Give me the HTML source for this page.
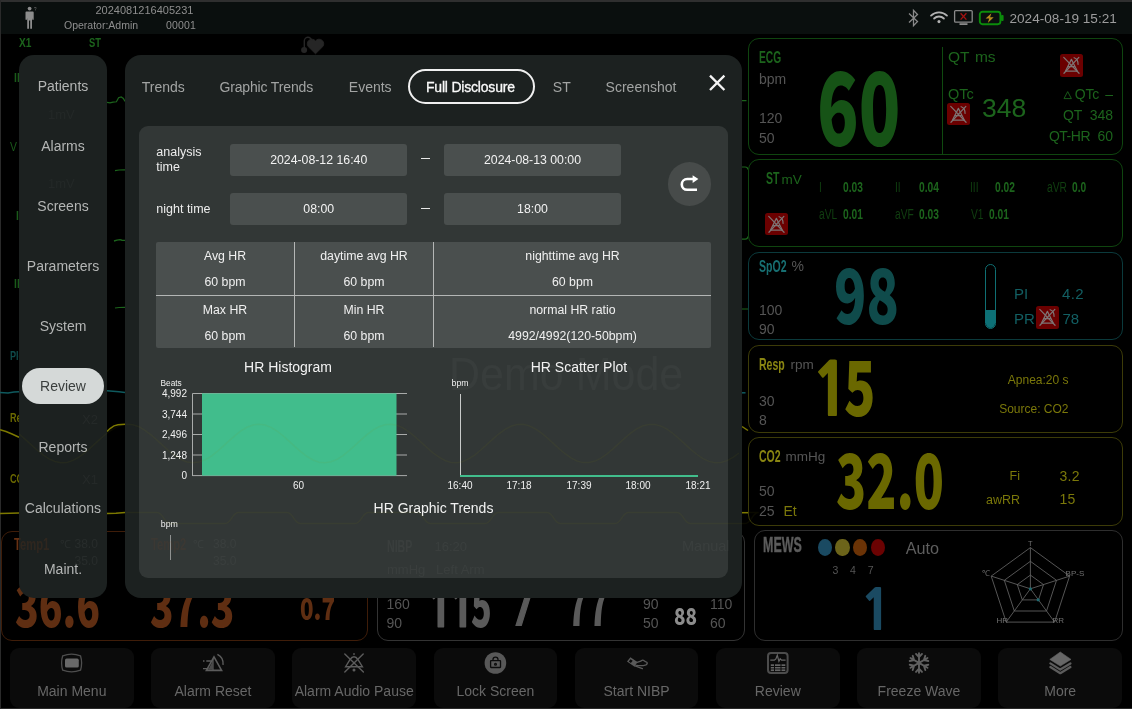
<!DOCTYPE html>
<html lang="en">
<head>
<meta charset="utf-8">
<title>Patient Monitor - Review</title>
<style>
*{box-sizing:border-box;margin:0;padding:0}
html,body{width:1132px;height:709px;overflow:hidden;background:#000}
body{position:relative;font-family:"Liberation Sans",sans-serif;color:#ddd}
.a{position:absolute;white-space:nowrap;line-height:1}
.c{position:absolute;white-space:nowrap;line-height:1;font-weight:bold;transform-origin:0 0;transform:scaleX(.62)}
.r{text-align:right}
.ctr{text-align:center}
.pnl{position:absolute;border:1px solid #333;border-radius:11px}
.g{color:#1c641c}
.gy{color:#555}
.t{color:#136060}
.y{color:#7d7a0a}
.red{position:absolute;width:22.8px;height:22.8px;background:#6b0000;border-radius:2.5px;margin:-.4px 0 0 -.3px}
.red svg{position:absolute;left:0;top:0}
/* top */
#frameT{position:absolute;left:0;top:0;width:1132px;height:2px;background:#2f2f2f}
#frameL{position:absolute;left:0;top:0;width:1px;height:709px;background:#2a2a2a}
#frameB{position:absolute;left:0;top:708px;width:1132px;height:1px;background:#2a2a2a}
#top{position:absolute;left:1px;top:2px;width:1131px;height:32px;background:#0a0f0e}
/* sidebar */
#side{position:absolute;left:19px;top:55px;width:88px;height:543px;background:#1c2120;border-radius:15px}
#side .it{position:absolute;left:0;width:88px;text-align:center;font-size:14px;color:#b4b6b5;line-height:16px}
#side .sel{position:absolute;left:3px;top:313px;width:82px;height:36px;border-radius:18px;background:#d5d9d8}
/* dialog */
#dlg{position:absolute;left:125px;top:55px;width:617px;height:543px;background:#1c2120;border-radius:16px}
#inner{position:absolute;left:14px;top:70.500px;width:589px;height:452px;background:#323736;border-radius:9px}
.tab{position:absolute;top:24px;font-size:14px;line-height:16px;color:#a2a4a3;white-space:nowrap}
.inp{position:absolute;width:177px;height:32px;background:#4a4f4e;border-radius:3px;color:#f2f2f2;font-size:12.3px;line-height:32px;text-align:center}
.lbl{position:absolute;font-size:12.5px;line-height:14.5px;color:#ececec}
.cell{position:absolute;font-size:12.3px;line-height:14px;color:#f0f0f0;text-align:center;white-space:nowrap}
.ttl{position:absolute;font-size:14px;line-height:16px;color:#f2f2f2;text-align:center;white-space:nowrap}
.ax{position:absolute;font-size:10px;line-height:10px;color:#f0f0f0;white-space:nowrap}
/* bottom */
.btn{position:absolute;top:648px;width:123.600px;height:59.500px;background:#0b0b0b;border-radius:9px}
.btn span{position:absolute;left:-10px;right:-10px;top:34.600px;text-align:center;font-size:14px;line-height:16px;color:#676767;white-space:nowrap}
.btn svg{position:absolute;left:50px;top:5px}
.st1{font-size:15.5px;color:#103f10;font-weight:normal;transform:scaleX(.66)}
.st2{font-size:15.5px;color:#1c641c;transform:scaleX(.66)}
.n{font-family:"Noto Sans CJK SC","Liberation Sans",sans-serif;font-weight:900}
.k{font-family:"NanumGothic","Liberation Sans",sans-serif;font-weight:800}
#root{position:absolute;left:0;top:0;width:1132px;height:709px;will-change:transform}
</style>
</head>
<body>
<div id="root">
<svg width="0" height="0" style="position:absolute"><defs>
<g id="noal" fill="none" stroke="#7e7474" stroke-width="1.15" stroke-linecap="round">
 <path d="M3.6 3.2L18.4 18.6M18.2 3.2L3.8 18.6"/>
 <path d="M11 5.2L5.2 16.6H16.8Z" stroke-linejoin="round"/>
 <path d="M8 12.2H14"/>
 <path d="M13.6 3.6Q17.6 5 17.4 10"/>
</g></defs></svg>
<div id="frameT"></div>
<div id="top"></div>
<div id="frameL"></div>
<div id="frameB"></div>

<!-- SECTION:topbar -->
<svg class="a" style="left:24px;top:5px" width="14" height="26" viewBox="0 0 14 26">
 <circle cx="5.6" cy="3.6" r="1.9" fill="#8c8c8c"/>
 <path d="M2.4 6.6h6.4q.9 0 .9.9v7.2H8.2V13.6H8v10.2H6.2V15.6H5V23.8H3.2V13.6H3v1.1H1.5V7.5q0-.9.9-.9z" fill="#8c8c8c"/>
 <text x="10" y="6" font-size="4.5" fill="#777" font-family="Liberation Sans,sans-serif">?</text>
</svg>
<div class="a" style="left:95.5px;top:4.6px;font-size:11px;color:#8e8e8e">2024081216405231</div>
<div class="a" style="left:64px;top:20.3px;font-size:10.5px;color:#8e8e8e">Operator:Admin</div>
<div class="a" style="left:166px;top:20.3px;font-size:10.5px;color:#8e8e8e;letter-spacing:.15px">00001</div>
<!-- status icons -->
<svg class="a" style="left:906px;top:8px" width="16" height="20" viewBox="0 0 16 20">
 <path d="M3 5.5l8.5 8-4 4.2V2.3l4 4.2-8.5 8" fill="none" stroke="#8a8a8a" stroke-width="1.3" stroke-linejoin="miter"/>
</svg>
<svg class="a" style="left:928.6px;top:9.6px" width="20" height="14.5" viewBox="0 0 22 16">
 <path d="M2.2 6.2a12.5 12.5 0 0 1 17.6 0" fill="none" stroke="#b2b2b2" stroke-width="2" stroke-linecap="round"/>
 <path d="M5.6 9.4a7.7 7.7 0 0 1 10.8 0" fill="none" stroke="#b2b2b2" stroke-width="2" stroke-linecap="round"/>
 <circle cx="11" cy="12.8" r="1.7" fill="#b2b2b2"/>
</svg>
<svg class="a" style="left:953px;top:9px" width="21" height="18" viewBox="0 0 21 18">
 <rect x="1.6" y="1.6" width="17.6" height="11.6" rx="1" fill="none" stroke="#8a8a8a" stroke-width="1.3"/>
 <path d="M6.5 14.2h8v1.8h-8z" fill="#8a8a8a"/>
 <path d="M7.6 4.2l5.8 6.4M13.4 4.2l-5.8 6.4" stroke="#a31212" stroke-width="1.3" fill="none"/>
</svg>
<svg class="a" style="left:978px;top:10px" width="27" height="16" viewBox="0 0 27 16">
 <rect x="1.8" y="1.8" width="20.6" height="12.4" rx="2.6" fill="none" stroke="#0b8c0b" stroke-width="1.9"/>
 <rect x="23" y="5" width="2.6" height="6" rx="1" fill="#0b8c0b"/>
 <path d="M13.4 3.2L7.6 8.6h3.6L9.8 12.9l5.9-5.6h-3.6z" fill="#b38a1e"/>
</svg>
<div class="a" style="left:1009.5px;top:11.7px;font-size:13.6px;color:#9c9c9c">2024-08-19 15:21</div>
<!-- SECTION:background -->
<div class="c" style="left:18.6px;top:35.8px;font-size:13px;color:#1c641c;transform:scaleX(.78)">X1</div>
<div class="c" style="left:89px;top:35.8px;font-size:13px;color:#1c641c;transform:scaleX(.72)">ST</div>
<div class="c" style="left:13.6px;top:71px;font-size:13px;color:#1a5a1a;transform:scaleX(.8)">II</div>
<div class="c" style="left:9.6px;top:139.8px;font-size:13px;color:#1a5a1a;transform:scaleX(.8);font-weight:normal">V</div>
<div class="c" style="left:15.6px;top:208.5px;font-size:13px;color:#1a5a1a;transform:scaleX(.8)">I</div>
<div class="c" style="left:13.6px;top:277px;font-size:13px;color:#1a5a1a;transform:scaleX(.8)">II</div>
<div class="c" style="left:9.6px;top:349px;font-size:13px;color:#0f4b4b;transform:scaleX(.7)">Pleth</div>
<div class="c" style="left:9.6px;top:411px;font-size:13px;color:#6a6800;transform:scaleX(.7)">Resp</div>
<div class="c" style="left:9.6px;top:472px;font-size:13px;color:#6a6800;transform:scaleX(.7)">CO2</div>
<svg class="a" style="left:300px;top:36px" width="26" height="19" viewBox="300 36 26 19">
 <path d="M315.5 53.8l-7.300-7.200a4.600 4.600 0 0 1 7.300-5.600a4.600 4.600 0 0 1 7.300 5.600z" fill="#262626" stroke="#262626" stroke-width=".8" stroke-linejoin="round"/>
 <circle cx="304.1" cy="50.1" r="3" fill="#262626"/>
 <path d="M304.3 50V41.300a3.700 3.700 0 0 1 7.400-.6" fill="none" stroke="#262626" stroke-width="1.400"/>
</svg>
<svg class="a" style="left:0;top:34px" width="760" height="500" viewBox="0 34 760 500">
 <g fill="none" stroke-width="1.200">
  <path d="M107 102.400l3 .4 3-.6 3.400-.4 2.200-4 2.600-.9 2.200 1.500 1.600 3" stroke="#1c641c"/>
  <path d="M115 170.600l4-.6 6-.2" stroke="#1c641c"/>
  <path d="M114 241l3-.9 3-.5 2 .6 3 .2" stroke="#1c641c" stroke-width="1.400"/>
  <path d="M115 308l4-.5 6-.2" stroke="#1c641c"/>
  <path d="M0 392.600l8 .3 6-.8 5-.4" stroke="#0f5a5e" stroke-width="1.5"/>
  <path d="M107 390.800l6 .4 6 .6 6 .8" stroke="#0f5a5e" stroke-width="1.5"/>
  <path d="M0 429.800l6 1.700 6 2.500 7 3.300" stroke="#7d7900" stroke-width="1.5"/>
  <path d="M107 431.500l3-3 4-2.600 4-1.200 7-.4" stroke="#7d7900" stroke-width="1.5"/>
  <path d="M0 513.500l10-.2 9-.3" stroke="#7d7900" stroke-width="1.500"/>
  <path d="M107 513.500l9-.3 9-.7" stroke="#7d7900" stroke-width="1.500"/>
  <path d="M742 100.700h4.500M742 309h6" stroke="#1c641c"/>
  <path d="M742 167h3.200q2.600 0 2.600 2.600M742 239.200h3.200q2.600 0 2.600-2.600" stroke="#1c641c"/>
  <path d="M742 392.800h3.500" stroke="#0f5a5e" stroke-width="1.500"/>
  <path d="M742 426.500l6 4" stroke="#7d7900" stroke-width="1.500"/>
  <path d="M742 512.700h6" stroke="#7d7900" stroke-width="1.500"/>
 </g>
</svg>
<!-- Temp panel -->
<div class="pnl" style="left:1px;top:530.5px;width:367px;height:110px;border-color:#3f1d09"></div>
<div class="c" style="left:14.2px;top:536.4px;font-size:17px;color:#5f2e12;transform:scaleX(.66)">Temp1</div>
<div class="c n" style="left:15.3px;top:574.8px;font-size:56.0px;color:#5f2e12;transform:scaleX(0.698)">36.6</div>
<div class="c n" style="left:150.2px;top:574.8px;font-size:56.0px;color:#5f2e12;transform:scaleX(0.691)">37.3</div>
<div class="c n" style="left:300.1px;top:592.2px;font-size:30.0px;color:#5f2e12;transform:scaleX(0.743)">0.7</div>
<!-- NIBP panel -->
<div class="pnl" style="left:377px;top:530.5px;width:368px;height:110px;border-color:#333"></div>
<div class="a gy" style="left:386.5px;top:596.5px;font-size:14px">160</div>
<div class="a gy" style="left:386.5px;top:616px;font-size:14px">90</div>
<div class="c k" style="left:425.1px;top:580.7px;font-size:54px;color:#5a5a5a;transform:scaleX(.907)">1</div><div class="c k" style="left:447.2px;top:580.7px;font-size:54px;color:#5a5a5a;transform:scaleX(.907)">1</div><div class="c n" style="left:471px;top:573.5px;font-size:57.6px;color:#5a5a5a;transform:scaleX(.593)">5</div>
<div class="c" style="left:516px;top:576.2px;font-size:58px;font-weight:normal;-webkit-text-stroke:1px #5a5a5a;color:#5a5a5a;transform:scaleX(1.15)">/</div>
<div class="c n" style="left:567.3px;top:572.5px;font-size:57.5px;color:#5a5a5a;transform:scaleX(0.605)">77</div>
<div class="a gy" style="left:643px;top:596.5px;font-size:14px">90</div>
<div class="a gy" style="left:643px;top:616px;font-size:14px">50</div>
<div class="c n" style="left:673.5px;top:603.9px;font-size:23.5px;color:#8c8c8c;transform:scaleX(0.807)">88</div>
<div class="a gy" style="left:710px;top:596.5px;font-size:14px">110</div>
<div class="a gy" style="left:710px;top:616px;font-size:14px">60</div>
<!-- SECTION:right -->
<!-- ECG -->
<div class="pnl" style="left:748px;top:38px;width:375px;height:117px;border-color:#0f450f"></div>
<div class="a" style="left:942px;top:47px;width:1px;height:107px;background:#0f4a0f"></div>
<div class="c g" style="left:759px;top:49.4px;font-size:16.5px">ECG</div>
<div class="a gy" style="left:759px;top:71.5px;font-size:14px">bpm</div>
<div class="a gy" style="left:759px;top:111px;font-size:14px">120</div>
<div class="a gy" style="left:759px;top:130.5px;font-size:14px">50</div>
<div class="c n" style="left:817.2px;top:50.7px;font-size:101.3px;color:#165316;transform:scaleX(0.676)">60</div>
<div class="a g" style="left:948px;top:49px;font-size:15.5px">QT</div><div class="a g" style="left:975px;top:49px;font-size:15.5px;letter-spacing:-.2px">ms</div>
<div class="a g" style="left:948px;top:87.2px;font-size:14.5px">QTc</div>
<div class="red" style="left:1060.5px;top:54.5px"><svg width="22.8" height="22.8" viewBox="0 0 22 22"><use href="#noal"/></svg></div>
<div class="red" style="left:947.5px;top:103px"><svg width="22.8" height="22.8" viewBox="0 0 22 22"><use href="#noal"/></svg></div>
<div class="a g" style="left:982px;top:94.7px;font-size:26.5px">348</div>
<svg class="a" style="left:1063px;top:90px" width="10" height="10" viewBox="0 0 10 10"><path d="M4.7 1.6L8.4 8.6H1z" fill="none" stroke="#1c641c" stroke-width=".9"/></svg>
<div class="a g r" style="left:1029px;top:87.2px;width:70px;font-size:14px;letter-spacing:-.2px">QTc</div>
<div class="a g r" style="left:1093px;top:87.2px;width:20px;font-size:14px">&ndash;</div>
<div class="a g r" style="left:1012px;top:108.3px;width:70px;font-size:14px;letter-spacing:-.2px">QT</div>
<div class="a g r" style="left:1073px;top:108.3px;width:40px;font-size:14px">348</div>
<div class="a g r" style="left:1020px;top:129.2px;width:70px;font-size:14px;letter-spacing:-.5px">QT-HR</div>
<div class="a g r" style="left:1073px;top:129.2px;width:40px;font-size:14px">60</div>
<!-- ST -->
<div class="pnl" style="left:748px;top:159px;width:375px;height:88px;border-color:#0f450f"></div>
<div class="c g" style="left:766px;top:169.8px;font-size:17px">ST</div>
<div class="a g" style="left:781.5px;top:172.5px;font-size:13.5px">mV</div>
<div class="red" style="left:765.5px;top:213px"><svg width="22.8" height="22.8" viewBox="0 0 22 22"><use href="#noal"/></svg></div>
<div class="c st1" style="left:819px;top:179px">I</div><div class="c st2" style="left:842.5px;top:179px">0.03</div>
<div class="c st1" style="left:895px;top:179px">II</div><div class="c st2" style="left:919.3px;top:179px">0.04</div>
<div class="c st1" style="left:970px;top:179px">III</div><div class="c st2" style="left:994.5px;top:179px">0.02</div>
<div class="c st1" style="left:1046.5px;top:179px">aVR</div><div class="c st2" style="left:1072px;top:179px">0.0</div>
<div class="c st1" style="left:818.5px;top:206.3px">aVL</div><div class="c st2" style="left:842.5px;top:206.3px">0.01</div>
<div class="c st1" style="left:894.5px;top:206.3px">aVF</div><div class="c st2" style="left:918.5px;top:206.3px">0.03</div>
<div class="c st1" style="left:970.5px;top:206.3px">V1</div><div class="c st2" style="left:989px;top:206.3px">0.01</div>
<!-- SpO2 -->
<div class="pnl" style="left:748px;top:252px;width:375px;height:88px;border-color:#0b3a3c"></div>
<div class="c" style="left:758.5px;top:257.5px;font-size:17px;color:#176f72">SpO2</div>
<div class="a gy" style="left:791.5px;top:259px;font-size:14px">%</div>
<div class="a gy" style="left:759px;top:302.5px;font-size:14px">100</div>
<div class="a gy" style="left:759px;top:322px;font-size:14px">90</div>
<div class="c n" style="left:834.2px;top:252.8px;font-size:76.0px;color:#0f4b4b;transform:scaleX(0.7)">98</div>
<div class="a" style="left:985px;top:264px;width:11px;height:65px;border:1px solid #0f6f73;border-radius:6px;overflow:hidden"><div class="a" style="left:0;right:0;bottom:0;height:18px;background:#0d7076"></div></div>
<div class="a t" style="left:1014px;top:286px;font-size:15px;color:#125f63">PI</div>
<div class="a t" style="left:1062px;top:286px;font-size:15px;color:#125f63;letter-spacing:.4px">4.2</div>
<div class="a t" style="left:1014px;top:311.4px;font-size:15px;color:#125f63">PR</div>
<div class="red" style="left:1036.7px;top:306.5px"><svg width="22.8" height="22.8" viewBox="0 0 22 22"><use href="#noal"/></svg></div>
<div class="a t" style="left:1062.5px;top:311.4px;font-size:15px;color:#125f63">78</div>
<!-- Resp -->
<div class="pnl" style="left:748px;top:344.5px;width:375px;height:88.5px;border-color:#3c3b08"></div>
<div class="c" style="left:759px;top:355.5px;font-size:17px;color:#8a8612">Resp</div>
<div class="a gy" style="left:790.5px;top:357.6px;font-size:13.5px">rpm</div>
<div class="a gy" style="left:759px;top:393.5px;font-size:14px">30</div>
<div class="a gy" style="left:759px;top:412.7px;font-size:14px">8</div>
<div class="c k" style="left:811px;top:354.2px;font-size:72.6px;color:#6a6800;transform:scaleX(.911)">1</div><div class="c n" style="left:844.4px;top:345.2px;font-size:76.4px;color:#6a6800;transform:scaleX(.677)">5</div>
<div class="a r" style="left:968px;top:374px;width:100.5px;font-size:12px;color:#7b780a">Apnea:20 s</div>
<div class="a r" style="left:968px;top:402.8px;width:100.5px;font-size:12px;color:#7b780a">Source: CO2</div>
<!-- CO2 -->
<div class="pnl" style="left:748px;top:437px;width:375px;height:88.5px;border-color:#3c3b08"></div>
<div class="c" style="left:759px;top:448px;font-size:17px;color:#8a8612">CO2</div>
<div class="a gy" style="left:785.5px;top:450px;font-size:13.5px">mmHg</div>
<div class="a gy" style="left:759px;top:484.3px;font-size:14px">50</div>
<div class="a gy" style="left:759px;top:503.7px;font-size:14px">25</div>
<div class="a" style="left:783.5px;top:503.7px;font-size:14px;color:#7b780a">Et</div>
<div class="c n" style="left:835.6px;top:437.8px;font-size:76.0px;color:#6a6800;transform:scaleX(0.653)">32.0</div>
<div class="a r" style="left:960px;top:470.3px;width:60px;font-size:12.5px;color:#7b780a">Fi</div>
<div class="a" style="left:1059.5px;top:468.6px;font-size:14px;color:#7b780a;letter-spacing:.3px">3.2</div>
<div class="a r" style="left:960px;top:493.7px;width:60px;font-size:12.5px;color:#7b780a">awRR</div>
<div class="a" style="left:1059.5px;top:492px;font-size:14px;color:#7b780a;letter-spacing:.3px">15</div>
<!-- MEWS -->
<div class="pnl" style="left:754px;top:530px;width:369px;height:111px;border-color:#2e2e2e"></div>
<div class="c" style="left:763.3px;top:534.8px;font-size:21.3px;color:#5c5c5c;transform:scaleX(.585);-webkit-text-stroke:.4px #5c5c5c">MEWS</div>
<div class="a" style="left:817.5px;top:538.5px;width:14.5px;height:17.5px;border-radius:50%;background:#1a4a62"></div>
<div class="a" style="left:835px;top:538.5px;width:14.5px;height:17.5px;border-radius:50%;background:#6c641a"></div>
<div class="a" style="left:852.7px;top:538.5px;width:14.5px;height:17.5px;border-radius:50%;background:#6b3306"></div>
<div class="a" style="left:870.5px;top:538.5px;width:14.5px;height:17.5px;border-radius:50%;background:#6b0202"></div>
<div class="a gy ctr" style="left:825.4px;top:565px;width:20px;font-size:10.5px">3</div>
<div class="a gy ctr" style="left:843px;top:565px;width:20px;font-size:10.5px">4</div>
<div class="a gy ctr" style="left:860.7px;top:565px;width:20px;font-size:10.5px">7</div>
<div class="a" style="left:905.7px;top:539.8px;font-size:16.2px;color:#5e5e5e">Auto</div>
<div class="c k" style="left:859.5px;top:582.6px;font-size:55.1px;color:#1a4a62;transform:scaleX(.978)">1</div>
<svg class="a" style="left:975px;top:535px" width="120" height="100" viewBox="975 535 120 100">
 <g fill="none" stroke="#646464" stroke-width=".85">
  <polygon points="1030.4,547.6 1069.6,576.1 1054.6,622.1 1006.2,622.1 991.2,576.1"/>
  <polygon points="1030.4,561.3 1056.5,580.3 1046.5,611 1014.3,611 1004.3,580.3"/>
  <polygon points="1030.4,575.1 1043.5,584.6 1038.5,599.9 1022.3,599.9 1017.3,584.6"/>
  <path d="M1030.4 588.8V547.6M1030.4 588.8L1069.6 576.1M1030.4 588.8L1054.6 622.1M1030.4 588.8L1006.2 622.1M1030.4 588.8L991.2 576.1"/>
 </g>
 <circle cx="1030.4" cy="588.8" r="1.6" fill="#1f6a70"/>
 <circle cx="1038.2" cy="599.8" r="1.6" fill="#1f6a70"/>
 <g font-family="Liberation Sans,sans-serif" font-size="8" fill="#707070">
  <text x="1030.4" y="546.3" text-anchor="middle" font-size="7.5">T</text>
  <text x="981.5" y="576.4">&#8451;</text>
  <text x="1065.6" y="575.8">BP-S</text>
  <text x="996.6" y="623.4">HR</text>
  <text x="1052.6" y="623.4">RR</text>
 </g>
</svg>
<!-- SECTION:bottom -->
<div class="btn" style="left:10px"><span>Main Menu</span></div>
<div class="btn" style="left:151.2px"><span>Alarm Reset</span></div>
<div class="btn" style="left:292.4px"><span>Alarm Audio Pause</span></div>
<div class="btn" style="left:433.6px"><span>Lock Screen</span></div>
<div class="btn" style="left:574.8px"><span>Start NIBP</span></div>
<div class="btn" style="left:716px"><span>Review</span></div>
<div class="btn" style="left:857.2px"><span>Freeze Wave</span></div>
<div class="btn" style="left:998.4px"><span>More</span></div>
<svg class="a" style="left:0;top:646px" width="1132" height="34" viewBox="0 646 1132 34">
 <g fill="none" stroke="#4e4e4e" stroke-width="1.300">
  <path d="M62.700 655.800Q71.600 652.500 80.500 655.800Q82.700 663 80.500 670.200Q71.600 673.500 62.700 670.200Q60.500 663 62.700 655.800Z"/>
 </g>
 <rect x="65" y="658.600" width="13.800" height="8.900" rx="1.600" fill="#686868"/>
 <g fill="none" stroke="#5c5c5c" stroke-width="1.400">
  <path d="M214 656.800L221.600 670.400H206.400Z" stroke-width="1.600"/>
  <path d="M212.900 659V670M203 668.600H208.600M203 661h1.500M206.300 661H211"/>
  <path d="M212.900 660.500L208.200 669.800H212.900Z" fill="#4a4a4a" stroke="none"/>
  <path d="M217.400 654.400Q223.800 657.600 223 664.800" stroke-width="1.500"/>
 </g>
 <g fill="none" stroke="#5c5c5c" stroke-width="1.400" stroke-linecap="round">
  <path d="M349.800 659.800Q354 653.800 358.200 659.800L362.400 666.700H345.600Z"/>
  <path d="M344.800 654L363.400 672M363.200 654L344.800 672"/>
  <path d="M354 653.600v1"/>
  <circle cx="354" cy="670" r=".8" fill="#5c5c5c"/>
 </g>
 <circle cx="495.400" cy="663" r="10.800" fill="#585858"/>
 <g fill="none" stroke="#0c0c0c" stroke-width="1.300">
  <rect x="490.600" y="660.600" width="9.900" height="6.900" rx=".5"/>
  <path d="M493 660.400v-.8a2.500 2.500 0 0 1 5 0v.8"/>
  <circle cx="495.500" cy="664.300" r=".9"/>
 </g>
 <path d="M630.400 657.200L637.400 662L634.600 666.800L627 661.400Z" fill="#5a5a5a"/>
 <path d="M630.500 659.200L632.700 660.700L630.900 662.900L628.800 661.400Z" fill="#0c0c0c"/>
 <g fill="none" stroke="#5a5a5a" stroke-width="1.300" stroke-linecap="round">
  <path d="M636 662.600C639 661.600 640.600 661.600 642.200 660.300C643.600 659.700 644.600 661.500 646 661.800C647.800 662.200 647.600 664 646 664.800C643 665.900 640 665.900 636.400 665.400"/>
  <path d="M635 665.800L642.400 668.700"/>
 </g>
 <rect x="768" y="653" width="19.600" height="20" rx="3" fill="none" stroke="#4c4c4c" stroke-width="2"/>
 <path d="M770.300 660.200h4l1.600-1.200 1.400-3.800 1.600 6.200 1.300-2.600 1.400 1.400h4" fill="none" stroke="#666" stroke-width="1.200"/>
 <g fill="#646464">
  <rect x="770.800" y="664.300" width="3.200" height="1.700"/><rect x="775" y="664.300" width="5.500" height="1.700"/><rect x="781.500" y="664.300" width="3.800" height="1.700"/>
  <rect x="770.800" y="667" width="3.200" height="1.500"/><rect x="775" y="667" width="5.500" height="1.500"/><rect x="781.500" y="667" width="3.800" height="1.500"/>
  <rect x="770.800" y="669.400" width="3.200" height="1.700"/><rect x="775" y="669.400" width="5.500" height="1.700"/><rect x="781.500" y="669.400" width="3.800" height="1.700"/>
 </g>
 <path d="M919.0 662.9L919.0 653.1M919.0 657.2L916.0 653.9M919.0 657.2L922.0 653.9M919.0 662.9L910.5 658.0M914.1 660.1L909.7 661.0M914.1 660.1L912.7 655.8M919.0 662.9L910.5 667.8M914.1 665.7L912.7 670.0M914.1 665.7L909.7 664.8M919.0 662.9L919.0 672.7M919.0 668.6L922.0 671.9M919.0 668.6L916.0 671.9M919.0 662.9L927.5 667.8M923.9 665.7L928.3 664.8M923.9 665.7L925.3 670.0M919.0 662.9L927.5 658.0M923.9 660.1L925.3 655.8M923.9 660.1L928.3 661.0" fill="none" stroke="#606060" stroke-width="1.900" stroke-linecap="round"/>
 <circle cx="919" cy="662.900" r="1.800" fill="#606060"/>
 <path d="M1060.300 652L1071 659.400L1060.300 666.100L1049.800 659.400Z" fill="#676767" stroke="#676767" stroke-width=".6" stroke-linejoin="round"/>
 <path d="M1050.400 663.400L1060.300 669.600L1070.400 663.400M1050.400 667L1060.300 673.200L1070.400 667" fill="none" stroke="#5c5c5c" stroke-width="2.300" stroke-linecap="round" stroke-linejoin="round"/>
</svg>
<!-- SECTION:sidebar -->
<div id="side">
 <div class="sel"></div>
 <div class="it" style="top:23px">Patients</div>
 <div class="it" style="top:83px">Alarms</div>
 <div class="it" style="top:143px">Screens</div>
 <div class="it" style="top:203px">Parameters</div>
 <div class="it" style="top:263px">System</div>
 <div class="it" style="top:323px;color:#3a3e3d">Review</div>
 <div class="it" style="top:384px">Reports</div>
 <div class="it" style="top:445px">Calculations</div>
 <div class="it" style="top:506px">Maint.</div>
</div>
<!-- SECTION:dialog -->
<div id="dlg">
 <div class="tab" style="left:16.800px">Trends</div>
 <div class="tab" style="left:94.400px;letter-spacing:-.15px">Graphic Trends</div>
 <div class="tab" style="left:223.800px">Events</div>
 <div class="a" style="left:283px;top:14px;width:127px;height:35px;border:2px solid #f0f0f0;border-radius:18px"></div>
 <div class="tab" style="left:301px;color:#fafafa;-webkit-text-stroke:.3px #fafafa;letter-spacing:-.2px">Full Disclosure</div>
 <div class="tab" style="left:427.800px">ST</div>
 <div class="tab" style="left:480.600px">Screenshot</div>
 <svg class="a" style="left:582px;top:18px" width="20" height="20" viewBox="0 0 20 20"><path d="M3 2.600L17.400 17M17.400 2.600L3 17" stroke="#f4f4f4" stroke-width="2.300" fill="none"/></svg>
 <div id="inner">
  <div class="lbl" style="left:17.300px;top:19.800px">analysis<br>time</div>
  <div class="inp" style="left:91.200px;top:18px">2024-08-12 16:40</div>
  <div class="a" style="left:282px;top:32.300px;width:9px;height:1.300px;background:#e8e8e8"></div>
  <div class="inp" style="left:305px;top:18px">2024-08-13 00:00</div>
  <div class="lbl" style="left:17.300px;top:76.800px">night time</div>
  <div class="inp" style="left:91.200px;top:67.500px;height:31.500px">08:00</div>
  <div class="a" style="left:282px;top:82px;width:9px;height:1.300px;background:#e8e8e8"></div>
  <div class="inp" style="left:305px;top:67.500px;height:31.500px">18:00</div>
  <div class="a" style="left:528.500px;top:36.500px;width:43.500px;height:43.500px;border-radius:50%;background:#474b4a"></div>
  <svg class="a" style="left:536px;top:44.500px" width="30" height="30" viewBox="675 170 30 30"><path d="M694 179H687.200a5.400 5.400 0 0 0 0 10.800H697" fill="none" stroke="#fff" stroke-width="2.600"/><path d="M692.600 175.200l5.800 3.800-5.800 3.900z" fill="#fff"/></svg>
  <!-- table -->
  <div class="a" style="left:17.300px;top:116.300px;width:554.400px;height:106.200px;background:#4a4f4e;border-radius:2px"></div>
  <div class="a" style="left:17.300px;top:169.600px;width:554.400px;height:1px;background:#b4b6b5"></div>
  <div class="a" style="left:155px;top:116.300px;width:1px;height:105.700px;background:#b4b6b5"></div>
  <div class="a" style="left:294px;top:116.300px;width:1px;height:105.700px;background:#b4b6b5"></div>
  <div class="cell" style="left:17px;width:138px;top:123px">Avg HR</div>
  <div class="cell" style="left:17px;width:138px;top:149.300px">60 bpm</div>
  <div class="cell" style="left:156px;width:138px;top:123px">daytime avg HR</div>
  <div class="cell" style="left:156px;width:138px;top:149.300px">60 bpm</div>
  <div class="cell" style="left:295px;width:277px;top:123px">nighttime avg HR</div>
  <div class="cell" style="left:295px;width:277px;top:149.300px">60 bpm</div>
  <div class="cell" style="left:17px;width:138px;top:177px">Max HR</div>
  <div class="cell" style="left:17px;width:138px;top:203px">60 bpm</div>
  <div class="cell" style="left:156px;width:138px;top:177px">Min HR</div>
  <div class="cell" style="left:156px;width:138px;top:203px">60 bpm</div>
  <div class="cell" style="left:295px;width:277px;top:177px">normal HR ratio</div>
  <div class="cell" style="left:295px;width:277px;top:203px">4992/4992(120-50bpm)</div>
  <!-- histogram -->
  <div class="ttl" style="left:99px;width:100px;top:233.800px">HR Histogram</div>
  <div class="ax" style="left:21.500px;top:252.300px;font-size:8.300px">Beats</div>
  <div class="ax r" style="left:10px;width:38px;top:263.400px">4,992</div>
  <div class="ax r" style="left:10px;width:38px;top:284px">3,744</div>
  <div class="ax r" style="left:10px;width:38px;top:304.500px">2,496</div>
  <div class="ax r" style="left:10px;width:38px;top:325px">1,248</div>
  <div class="ax r" style="left:10px;width:38px;top:345.300px">0</div>
  <svg class="a" style="left:50px;top:263.500px" width="225" height="92" viewBox="189 389 225 92">
   <g stroke="#a9abaa" stroke-width="1" fill="none">
    <path d="M192.500 393.500v82.500M192.500 393.500h214.500M192.500 414h14M396 414h11M192.500 434.500h14M396 434.500h11M192.500 455h14M396 455h11M192.500 475.600h214.500"/>
   </g>
   <rect x="202" y="393.400" width="194.500" height="82.200" fill="#41bd8c"/>
  </svg>
  <div class="ax ctr" style="left:139.500px;width:40px;top:355.500px">60</div>
  <!-- scatter -->
  <div class="ttl" style="left:390px;width:100px;top:233.800px">HR Scatter Plot</div>
  <div class="ax" style="left:312.500px;top:252.300px;font-size:8.800px">bpm</div>
  <div class="a" style="left:321px;top:268.300px;width:1px;height:82.500px;background:#c8cac9"></div>
  <div class="a" style="left:321px;top:349.700px;width:238px;height:1.600px;background:#41bd8c"></div>
  <div class="ax ctr" style="left:301px;width:40px;top:355.500px">16:40</div>
  <div class="ax ctr" style="left:360px;width:40px;top:355.500px">17:18</div>
  <div class="ax ctr" style="left:420px;width:40px;top:355.500px">17:39</div>
  <div class="ax ctr" style="left:479px;width:40px;top:355.500px">18:00</div>
  <div class="ax ctr" style="left:539px;width:40px;top:355.500px">18:21</div>
  <!-- trends -->
  <div class="ttl" style="left:194.500px;width:200px;top:374.200px">HR Graphic Trends</div>
  <div class="ax" style="left:21.800px;top:393.600px;font-size:8.800px">bpm</div>
  <div class="a" style="left:31px;top:409.200px;width:1px;height:25px;background:#8f9190"></div>
 </div>
</div>
<!-- ghost (underlying screen faintly visible through translucent panels) -->
<div class="a" style="left:448.500px;top:349.500px;font-size:47px;color:rgba(255,255,255,.032);transform-origin:0 0;transform:scaleX(.915)">Demo Mode</div>
<svg class="a" style="left:0;top:400px" width="760" height="140" viewBox="0 400 760 140"><path d="M19 433.9L25 439.1L31 444.6L37 450.0L43 454.9L49 458.9L55 461.5L61 462.7L67 462.4L73 460.4L79 457.1L85 452.6L91 447.4L97 441.9L103 436.5L109 431.7L115 427.8L121 425.3L127 424.2L133 424.8L139 426.8L145 430.3L151 434.8L157 440.1L163 445.6L169 451.0L175 455.7L181 459.5L187 461.9L193 462.8L199 462.1L205 459.9L211 456.3L217 451.7L223 446.4L229 440.9L235 435.6L241 430.9L247 427.3L253 425.0L259 424.2L265 425.0L271 427.4L277 431.0L283 435.7L289 441.1L295 446.6L301 451.9L307 456.5L313 460.0L319 462.2L325 462.8L331 461.8L337 459.4L343 455.6L349 450.8L355 445.4L361 439.9L367 434.6L373 430.1L379 426.7L385 424.7L391 424.2L397 425.3L403 427.9L409 431.8L415 436.7L421 442.1L427 447.6L433 452.8L439 457.2L445 460.5L451 462.4L457 462.7L463 461.5L469 458.7L475 454.8L481 449.8L487 444.4L493 438.9L499 433.8L505 429.4L511 426.3L517 424.5L523 424.3L529 425.7L535 428.6L541 432.7L547 437.6L553 443.1L559 448.6L565 453.7L571 457.9L577 461.0L583 462.6L589 462.6L595 461.1L601 458.1L607 453.9L613 448.9L619 443.4L625 437.9L631 432.9L637 428.7L643 425.8L649 424.4L655 424.5L661 426.1L667 429.2L673 433.5L679 438.6L685 444.1L691 449.6L697 454.5L703 458.6L709 461.4L715 462.7L721 462.5L727 460.6L733 457.4L739 453.0" fill="none" stroke="rgba(140,135,0,.07)" stroke-width="1.500"/></svg>
<svg class="a" style="left:0;top:500px" width="760" height="40" viewBox="0 500 760 40"><path d="M107 512.600H156.7C163.7 512.600 163.7 523.600 170.7 523.600H224.5C231.7 523.600 231.7 512.600 238.7 512.600H286.7C293.7 512.600 293.7 523.600 300.7 523.600H354.5C361.7 523.600 361.7 512.600 368.7 512.600H416.7C423.7 512.600 423.7 523.600 430.7 523.600H484.5C491.7 523.600 491.7 512.600 498.7 512.600H546.7C553.7 512.600 553.7 523.600 560.7 523.600H614.5C621.7 523.600 621.7 512.600 628.7 512.600H676.7C683.7 512.600 683.7 523.600 690.7 523.600H744.5C751.7 523.600 751.7 512.600 758.7 512.600H742" fill="none" stroke="rgba(140,135,0,.07)" stroke-width="1.500"/></svg>
<div class="c" style="left:14.200px;top:536.400px;font-size:17px;color:rgba(150,70,25,.16);transform:scaleX(.66)">Temp1</div>
<div class="a" style="left:60px;top:538.500px;font-size:11px;color:rgba(255,255,255,.05)">&#8451;</div>
<div class="a" style="left:74.500px;top:538px;font-size:12px;color:rgba(255,255,255,.05)">38.0</div>
<div class="a" style="left:74.500px;top:555px;font-size:12px;color:rgba(255,255,255,.05)">35.0</div>
<div class="c" style="left:150.500px;top:536.400px;font-size:17px;color:rgba(150,70,25,.10);transform:scaleX(.66)">Temp2</div>
<div class="a" style="left:193px;top:538.500px;font-size:11px;color:rgba(255,255,255,.04)">&#8451;</div>
<div class="a" style="left:213px;top:538px;font-size:12px;color:rgba(255,255,255,.04)">38.0</div>
<div class="a" style="left:213px;top:555px;font-size:12px;color:rgba(255,255,255,.04)">35.0</div>
<div class="c" style="left:387px;top:538.500px;font-size:16px;color:rgba(255,255,255,.04);transform:scaleX(.66)">NIBP</div>
<div class="a" style="left:434.500px;top:540px;font-size:13px;color:rgba(255,255,255,.04)">16:20</div>
<div class="a" style="left:682px;top:539px;font-size:14.500px;color:rgba(255,255,255,.04)">Manual</div>
<div class="a" style="left:387px;top:563px;font-size:13px;color:rgba(255,255,255,.04)">mmHg&nbsp;&nbsp; Left Arm</div>
<div class="a" style="left:82px;top:412.500px;font-size:13px;color:rgba(255,255,255,.04)">X2</div>
<div class="a" style="left:82px;top:473px;font-size:13px;color:rgba(255,255,255,.04)">X1</div>
<div class="a" style="left:48px;top:108px;font-size:13px;color:rgba(255,255,255,.03)">1mV</div>
<div class="a" style="left:48px;top:177px;font-size:13px;color:rgba(255,255,255,.03)">1mV</div>
</div>
</body>
</html>
